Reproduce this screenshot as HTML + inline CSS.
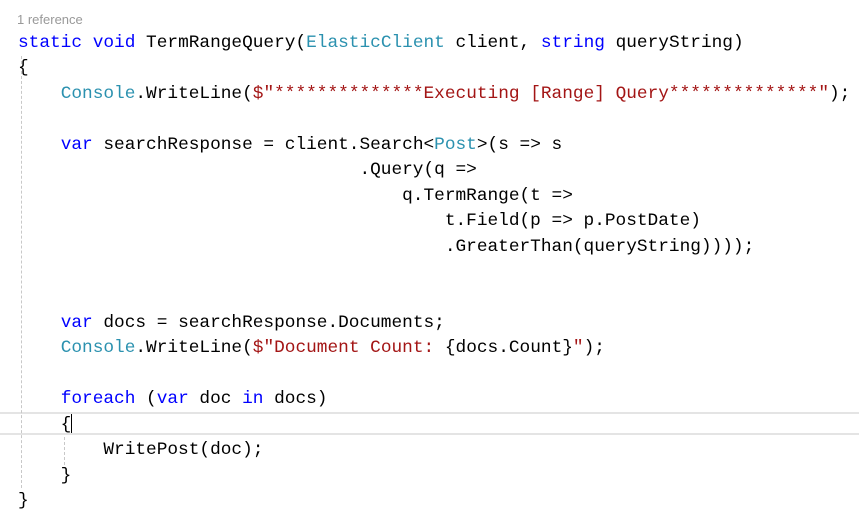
<!DOCTYPE html><html><head><style>
body{margin:0;width:859px;height:516px;background:#fff;position:relative;overflow:hidden}
.ref{position:absolute;left:17px;top:12px;font:13px "Liberation Sans",sans-serif;color:#999}
pre{position:absolute;left:18px;top:31px;margin:0;font:17.8px/25.45px "Liberation Mono",monospace;color:#000}
.k{color:#0000ff}.t{color:#2b91af}.s{color:#a31515}
.hl{position:absolute;left:0;top:412px;width:859px;height:19px;border-top:2px solid #e4e4e4;border-bottom:2px solid #e4e4e4}
.g{position:absolute;width:0;border-left:1px dashed #c8c8c8}
.cur{position:absolute;left:71px;top:414px;width:1px;height:19px;background:#000}
</style></head><body>
<div class="hl"></div>
<div class="g" style="left:21px;top:56px;height:432px"></div>
<div class="g" style="left:64px;top:437px;height:28px"></div>
<div class="ref">1 reference</div>
<pre><span class="k">static</span> <span class="k">void</span> TermRangeQuery(<span class="t">ElasticClient</span> client, <span class="k">string</span> queryString)
{
    <span class="t">Console</span>.WriteLine(<span class="s">$"**************Executing [Range] Query**************"</span>);

    <span class="k">var</span> searchResponse = client.Search&lt;<span class="t">Post</span>&gt;(s =&gt; s
                                .Query(q =&gt;
                                    q.TermRange(t =&gt;
                                        t.Field(p =&gt; p.PostDate)
                                        .GreaterThan(queryString))));


    <span class="k">var</span> docs = searchResponse.Documents;
    <span class="t">Console</span>.WriteLine(<span class="s">$"Document Count: </span>{docs.Count}<span class="s">"</span>);

    <span class="k">foreach</span> (<span class="k">var</span> doc <span class="k">in</span> docs)
    {
        WritePost(doc);
    }
}</pre>
<div class="cur"></div>
</body></html>
